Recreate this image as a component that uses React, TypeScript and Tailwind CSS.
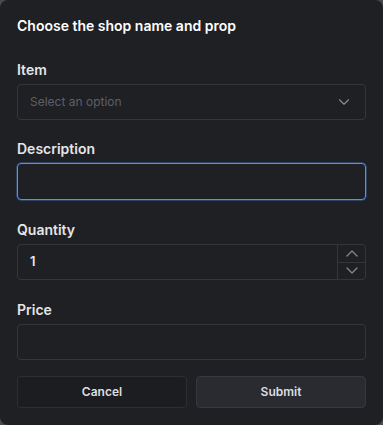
import { ChevronDown } from "lucide-react";

const FONT = { fontFamily: "Inter, 'Noto Sans', sans-serif" };

function Label({ children }: { children: React.ReactNode }) {
  return <label className="block text-[14px] font-semibold leading-[20px] text-[#e4e5e8]">{children}</label>;
}

// small stepper chevron, drawn tight so it fits the half-height cell
function StepChevron({ up }: { up?: boolean }) {
  return (
    <svg width="12" height="7" viewBox="0 0 12 7" fill="none" className="text-[#85878d]">
      <path d={up ? "M1 6L6 1L11 6" : "M1 1L6 6L11 1"} stroke="currentColor" strokeWidth="1.3" strokeLinecap="round" strokeLinejoin="round" />
    </svg>
  );
}

export default function App() {
  return (
    <div className="min-h-screen w-[383px] bg-[#4a4a4c]" style={FONT}>
      <div className="h-[425px] w-[383px] overflow-hidden rounded-[8px] bg-[#1f2024] px-[17px] pt-[16px]">
        <h2 className="text-[14px] font-semibold leading-[20px] text-white">Choose the shop name and prop</h2>

        <div className="mt-[24px] flex flex-col gap-[4px]">
          <Label>Item</Label>
          <div className="flex h-[36px] items-center justify-between rounded-[4px] border border-[#35363b] px-[12px]">
            <span className="text-[12px] text-[#5d5f66]">Select an option</span>
            <ChevronDown size={18} strokeWidth={1.5} className="text-[#8b8d93]" />
          </div>
        </div>

        <div className="mt-[19px] flex flex-col gap-[4px]">
          <Label>Description</Label>
          <div className="h-[37px] rounded-[4px] border border-[#4d93ff] shadow-[0_0_0_0.5px_rgba(77,147,255,0.6)]" />
        </div>

        <div className="mt-[20px] flex flex-col gap-[4px]">
          <Label>Quantity</Label>
          <div className="flex h-[36px] rounded-[4px] border border-[#35363b]">
            <div className="flex flex-1 items-center px-[12px] text-[13px] font-semibold text-[#e4e5e8]">1</div>
            <div className="flex w-[28px] flex-col border-l border-[#35363b]">
              <div className="flex flex-1 items-center justify-center border-b border-[#35363b]">
                <StepChevron up />
              </div>
              <div className="flex flex-1 items-center justify-center">
                <StepChevron />
              </div>
            </div>
          </div>
        </div>

        <div className="mt-[20px] flex flex-col gap-[4px]">
          <Label>Price</Label>
          <div className="h-[36px] rounded-[4px] border border-[#35363b]" />
        </div>

        <div className="mt-[16px] grid grid-cols-2 gap-[9px]">
          <button className="h-[32px] rounded-[4px] border border-[#2e2f34] bg-[#1c1d21] text-[12px] font-semibold text-[#dcdde0]">
            Cancel
          </button>
          <button className="h-[32px] rounded-[4px] border border-[#37383d] bg-[#2a2b30] text-[12px] font-semibold text-[#dcdde0]">
            Submit
          </button>
        </div>
      </div>
    </div>
  );
}
